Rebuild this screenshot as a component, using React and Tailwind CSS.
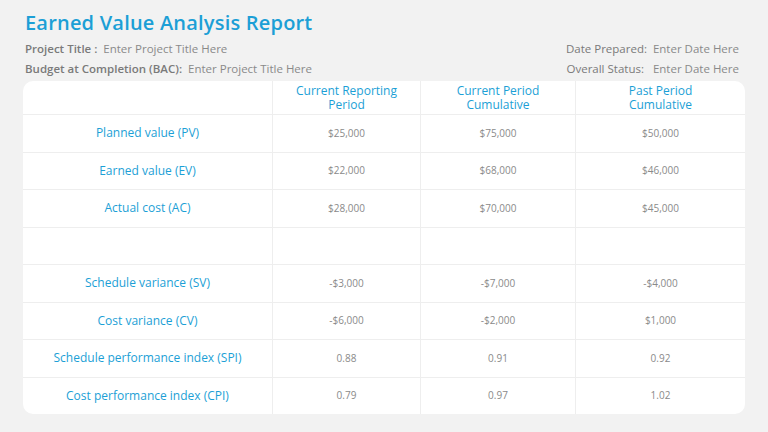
export default function App(){
const rows=[["Planned value (PV)","$25,000","$75,000","$50,000"],["Earned value (EV)","$22,000","$68,000","$46,000"],["Actual cost (AC)","$28,000","$70,000","$45,000"],["","","",""],["Schedule variance (SV)","-$3,000","-$7,000","-$4,000"],["Cost variance (CV)","-$6,000","-$2,000","$1,000"],["Schedule performance index (SPI)","0.88","0.91","0.92"],["Cost performance index (CPI)","0.79","0.97","1.02"]];
const cols="grid grid-cols-[249px_148px_155px_170px]";
return <div className="w-[768px] h-[432px] bg-[#f2f2f2] px-[23px] pt-[10px]" style={{fontFamily:'"Open Sans",sans-serif'}}>
<h1 className="text-[20px] font-semibold text-[#1c9fd6] leading-[26px] ml-[2px] tracking-[0.2px]">Earned Value Analysis Report</h1>
<div className="flex justify-between text-[11.5px] text-[#8a8a8a] mt-[3px] px-[2px] leading-[20px]">
<div><div><span className="font-semibold text-[#7a7a7a]">Project Title : </span>&nbsp;Enter Project Title Here</div><div><span className="font-semibold text-[#7a7a7a]">Budget at Completion (BAC):</span>&nbsp; Enter Project Title Here</div></div>
<div className="text-right pr-[4px]"><div><span className="text-[#7a7a7a]">Date Prepared:</span>&nbsp; Enter Date Here</div><div><span className="text-[#7a7a7a]">Overall Status:</span>&nbsp;&nbsp; Enter Date Here</div></div>
</div>
<div className="mt-[2px] bg-white rounded-[10px] w-[722px] overflow-hidden">
<div className={cols+" h-[33px] text-[12px] font-medium text-[#1c9fd6] leading-[14px] text-center items-center"}>
<div className="h-full"></div>
<div className="h-full flex items-center justify-center border-l border-[#eeeeee]">Current Reporting<br/>Period</div>
<div className="h-full flex items-center justify-center border-l border-[#eeeeee]">Current Period<br/>Cumulative</div>
<div className="h-full flex items-center justify-center border-l border-[#eeeeee]">Past Period<br/>Cumulative</div>
</div>
{rows.map((r,i)=><div key={i} className={cols+" h-[37.5px] border-t border-[#eeeeee] text-center"}>
<div className="flex items-center justify-center text-[12px] text-[#1c9fd6]">{r[0]}</div>
{r.slice(1).map((v,j)=><div key={j} className="flex items-center justify-center border-l border-[#eeeeee] text-[10px] text-[#8a8a8a]">{v}</div>)}
</div>)}
</div>
</div>}
